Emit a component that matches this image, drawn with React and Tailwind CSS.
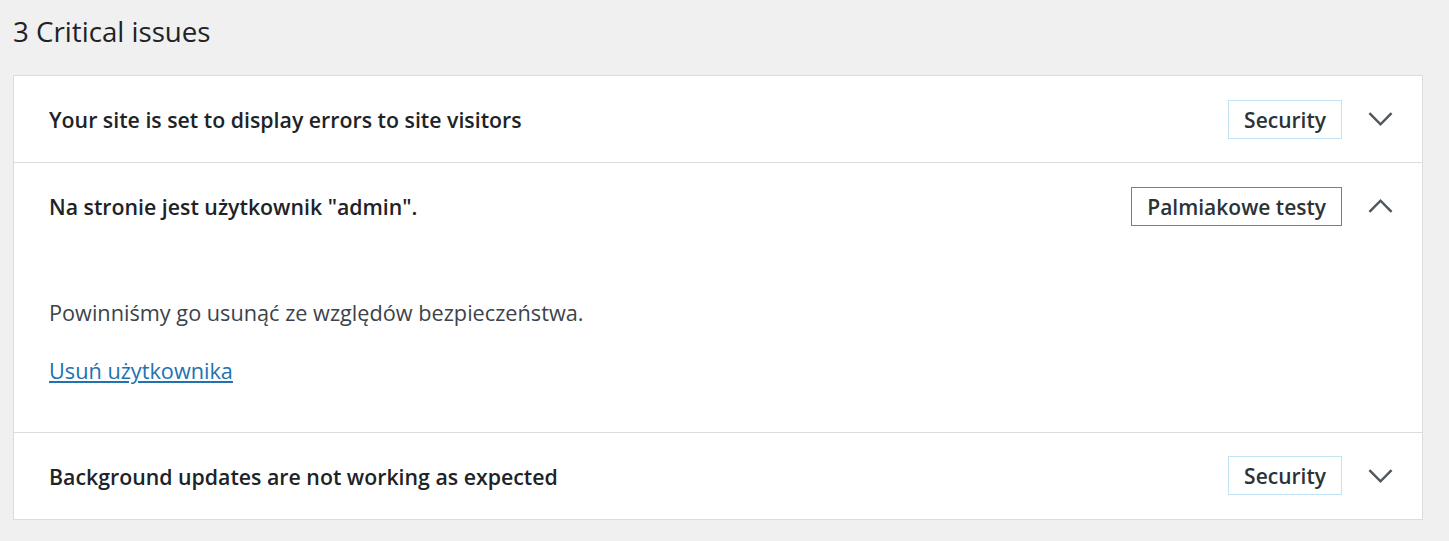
import { useState } from "react";

const issues = [
  {
    id: "errors",
    title: "Your site is set to display errors to site visitors",
    badge: "Security",
    tone: "blue",
  },
  {
    id: "admin",
    title: 'Na stronie jest użytkownik "admin".',
    badge: "Palmiakowe testy",
    tone: "red",
    description: "Powinniśmy go usunąć ze względów bezpieczeństwa.",
    action: "Usuń użytkownika",
  },
  {
    id: "updates",
    title: "Background updates are not working as expected",
    badge: "Security",
    tone: "blue",
  },
];

function Badge({ tone, children }) {
  if (tone === "red") {
    return (
      <span className="border border-solid border-[#e65054] px-[15px] pb-[4px] pt-[5px] text-[21px] font-semibold leading-[28px] text-[#2c3338]">
        {children}
      </span>
    );
  }
  return (
    <span className="border border-solid border-[#c0e3f5] px-[15px] pb-[4px] pt-[5px] text-[21px] font-semibold leading-[28px] text-[#2c3338]">
      {children}
    </span>
  );
}

function Chevron({ open }) {
  return (
    <svg width="26" height="16" viewBox="0 0 26 16" className="text-[#50575e]">
      <path
        d={open ? "M1.5 14 L13 2.5 L24.5 14" : "M1.5 2 L13 13.5 L24.5 2"}
        fill="none"
        stroke="currentColor"
        strokeWidth="2.6"
      />
    </svg>
  );
}

export default function App() {
  const [open, setOpen] = useState("admin");

  return (
    <div className="min-h-[541px] bg-[#f0f0f1] pl-[13px] pr-[26px] pt-[11px] font-['Open_Sans',sans-serif] text-[#1d2327]">
      <h2 className="text-[27.7px] leading-[40px] text-[#1d2327]">3 Critical issues</h2>
      <div className="mt-[24px] border border-[#dcdcde] bg-white">
        {issues.map((issue, i) => {
          const isOpen = open === issue.id;
          return (
            <div key={issue.id} className={i > 0 ? "border-t border-[#dcdcde]" : ""}>
              <button
                onClick={() => setOpen(isOpen ? null : issue.id)}
                className="flex h-[86px] w-full items-center pl-[35px] pr-[29px] text-left"
              >
                <span className="flex-1 pt-[2px] text-[21.3px] font-semibold text-[#1d2327]">
                  {issue.title}
                </span>
                <Badge tone={issue.tone}>{issue.badge}</Badge>
                <span className="ml-[26px] flex w-[25px] justify-center">
                  <Chevron open={isOpen} />
                </span>
              </button>
              {isOpen && issue.description ? (
                <div className="px-[35px] pb-[44px] pt-[50px] text-[21.7px] text-[#3c434a]">
                  <p className="leading-[28px]">{issue.description}</p>
                  <a href="#" className="mt-[30px] inline-block leading-[28px] text-[#2271b1] underline">
                    {issue.action}
                  </a>
                </div>
              ) : null}
            </div>
          );
        })}
      </div>
    </div>
  );
}
